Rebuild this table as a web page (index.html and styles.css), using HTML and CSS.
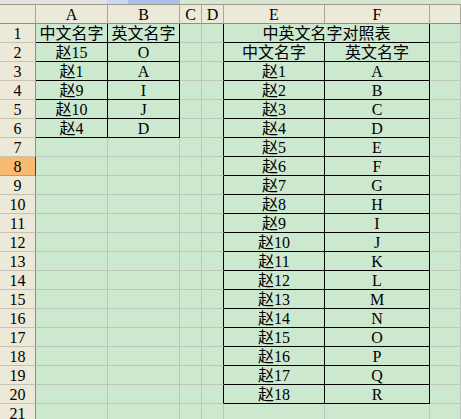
FILE: index.html
```html
<!DOCTYPE html>
<html lang="zh-CN">
<head>
<meta charset="utf-8">
<title>中英文名字对照表</title>
<link rel="stylesheet" href="styles.css">
</head>
<body>
<div class="strip">
  <div class="seg s1"></div><div class="seg s2"></div><div class="seg s3"></div><div class="seg s4"></div>
</div>
<div class="sheet">
  <div class="c ch corner"></div><div class="c ch">A</div><div class="c ch">B</div><div class="c ch">C</div><div class="c ch">D</div><div class="c ch">E</div><div class="c ch">F</div><div class="c ch"></div>

  <div class="c rh">1</div><div class="c br bb">中文名字</div><div class="c br bb">英文名字</div><div class="c"></div><div class="c br"></div><div class="c span2 br bb">中英文名字对照表</div><div class="c"></div>

  <div class="c rh">2</div><div class="c br bb">赵15</div><div class="c br bb">O</div><div class="c"></div><div class="c br"></div><div class="c br bb">中文名字</div><div class="c br bb">英文名字</div><div class="c"></div>

  <div class="c rh">3</div><div class="c br bb">赵1</div><div class="c br bb">A</div><div class="c"></div><div class="c br"></div><div class="c br bb">赵1</div><div class="c br bb">A</div><div class="c"></div>

  <div class="c rh">4</div><div class="c br bb">赵9</div><div class="c br bb">I</div><div class="c"></div><div class="c br"></div><div class="c br bb">赵2</div><div class="c br bb">B</div><div class="c"></div>

  <div class="c rh">5</div><div class="c br bb">赵10</div><div class="c br bb">J</div><div class="c"></div><div class="c br"></div><div class="c br bb">赵3</div><div class="c br bb">C</div><div class="c"></div>

  <div class="c rh">6</div><div class="c br bb">赵4</div><div class="c br bb">D</div><div class="c"></div><div class="c br"></div><div class="c br bb">赵4</div><div class="c br bb">D</div><div class="c"></div>

  <div class="c rh">7</div><div class="c"></div><div class="c"></div><div class="c"></div><div class="c br"></div><div class="c br bb">赵5</div><div class="c br bb">E</div><div class="c"></div>

  <div class="c rh sel">8</div><div class="c"></div><div class="c"></div><div class="c"></div><div class="c br"></div><div class="c br bb">赵6</div><div class="c br bb">F</div><div class="c"></div>

  <div class="c rh">9</div><div class="c"></div><div class="c"></div><div class="c"></div><div class="c br"></div><div class="c br bb">赵7</div><div class="c br bb">G</div><div class="c"></div>

  <div class="c rh">10</div><div class="c"></div><div class="c"></div><div class="c"></div><div class="c br"></div><div class="c br bb">赵8</div><div class="c br bb">H</div><div class="c"></div>

  <div class="c rh">11</div><div class="c"></div><div class="c"></div><div class="c"></div><div class="c br"></div><div class="c br bb">赵9</div><div class="c br bb">I</div><div class="c"></div>

  <div class="c rh">12</div><div class="c"></div><div class="c"></div><div class="c"></div><div class="c br"></div><div class="c br bb">赵10</div><div class="c br bb">J</div><div class="c"></div>

  <div class="c rh">13</div><div class="c"></div><div class="c"></div><div class="c"></div><div class="c br"></div><div class="c br bb">赵11</div><div class="c br bb">K</div><div class="c"></div>

  <div class="c rh">14</div><div class="c"></div><div class="c"></div><div class="c"></div><div class="c br"></div><div class="c br bb">赵12</div><div class="c br bb">L</div><div class="c"></div>

  <div class="c rh">15</div><div class="c"></div><div class="c"></div><div class="c"></div><div class="c br"></div><div class="c br bb">赵13</div><div class="c br bb">M</div><div class="c"></div>

  <div class="c rh">16</div><div class="c"></div><div class="c"></div><div class="c"></div><div class="c br"></div><div class="c br bb">赵14</div><div class="c br bb">N</div><div class="c"></div>

  <div class="c rh">17</div><div class="c"></div><div class="c"></div><div class="c"></div><div class="c br"></div><div class="c br bb">赵15</div><div class="c br bb">O</div><div class="c"></div>

  <div class="c rh">18</div><div class="c"></div><div class="c"></div><div class="c"></div><div class="c br"></div><div class="c br bb">赵16</div><div class="c br bb">P</div><div class="c"></div>

  <div class="c rh">19</div><div class="c"></div><div class="c"></div><div class="c"></div><div class="c br"></div><div class="c br bb">赵17</div><div class="c br bb">Q</div><div class="c"></div>

  <div class="c rh">20</div><div class="c"></div><div class="c"></div><div class="c"></div><div class="c br"></div><div class="c br bb">赵18</div><div class="c br bb">R</div><div class="c"></div>

  <div class="c rh">21</div><div class="c"></div><div class="c"></div><div class="c"></div><div class="c"></div><div class="c"></div><div class="c"></div><div class="c"></div>
</div>
</body>
</html>
```
FILE: styles.css
```css
html, body {
  margin: 0;
  padding: 0;
}

body {
  width: 461px;
  height: 419px;
  overflow: hidden;
  background: #cce8cf;
  font-family: "Liberation Serif", "Noto Sans CJK SC", serif;
  font-size: 16px;
  color: #000;
}

.strip {
  display: flex;
  height: 4px;
}

.seg {
  height: 100%;
}

.s1 { width: 107px; background: #e2e2e2; }
.s2 { width: 21px; background: #c8d8f0; }
.s3 { width: 52px; background: #a9c1e8; }
.s4 { flex: 1; background: #d7e6d2; }

.sheet {
  display: grid;
  grid-template-columns: 36px 72px 72px 22px 22px 101px 105px 1fr;
  grid-template-rows: 20px repeat(21, 19px);
}

.c {
  box-sizing: border-box;
  border-right: 1px solid #bcc6bc;
  border-bottom: 1px solid #bcc6bc;
  text-align: center;
  line-height: 19px;
  white-space: nowrap;
  overflow: hidden;
}

.ch {
  background: #ece9d8;
  border-top: 1px solid #9d9a8d;
  border-right-color: #aca899;
  border-bottom-color: #8f8c80;
  line-height: 19px;
}

.rh {
  background: #ece9d8;
  border-right-color: #8f8c80;
  border-bottom-color: #c5c2b2;
}

.rh.sel {
  background: #f9bb72;
  border-right-color: #27357a;
  border-bottom-color: #c99a5e;
}

.span2 {
  grid-column: span 2;
}

.br {
  border-right-color: #000;
}

.bb {
  border-bottom-color: #000;
}
```
